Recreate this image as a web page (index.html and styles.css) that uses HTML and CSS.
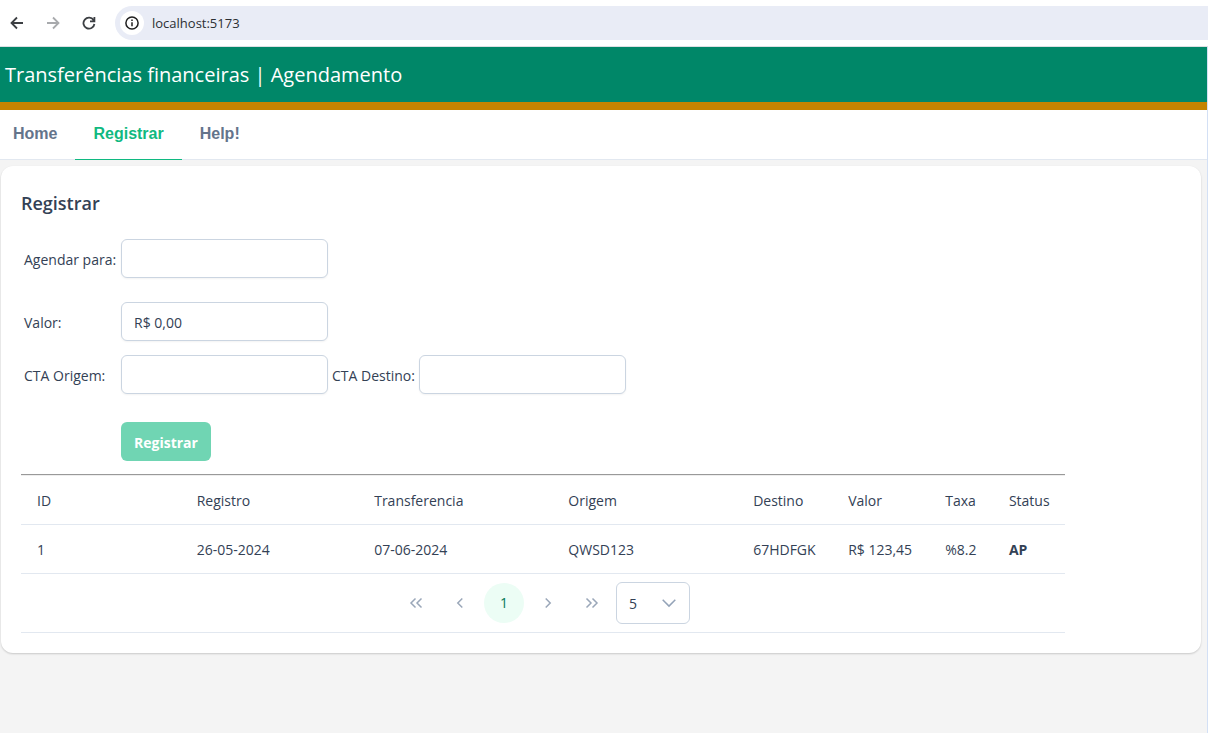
FILE: index.html
```html
<!DOCTYPE html>
<html lang="pt-BR">
<head>
<meta charset="utf-8">
<title>Transferências financeiras | Agendamento</title>
<link rel="stylesheet" href="styles.css">
</head>
<body>
<div class="toolbar">
  <button class="nav-btn" type="button" aria-label="Voltar"><svg width="14" height="14" viewBox="0 0 14 14"><path d="M13 7H1.8M7 1.5L1.5 7L7 12.5"/></svg></button>
  <button class="nav-btn nav-btn-off" type="button" aria-label="Avançar"><svg width="14" height="14" viewBox="0 0 14 14"><path d="M1 7H12.2M7 1.5L12.5 7L7 12.5"/></svg></button>
  <button class="nav-btn" type="button" aria-label="Recarregar"><svg width="14" height="14" viewBox="0 0 14 14"><path d="M11.6 4.2A5.5 5.5 0 1 0 12.4 8M12.4 1V5.4H8"/></svg></button>
  <div class="address">
    <button class="info-btn" type="button" aria-label="Informações do site"><svg width="14" height="14" viewBox="0 0 14 14"><circle cx="7" cy="7" r="6.1"/><path d="M7 6.2V10.2M7 3.6V5.1"/></svg></button>
    <input class="url" type="text" aria-label="Endereço" value="localhost:5173">
  </div>
</div>
<div class="page">
  <header class="banner"><h1 class="banner-title">Transferências financeiras | Agendamento</h1></header>
  <nav class="tabs">
    <a class="tab" href="#home">Home</a>
    <a class="tab tab-active" href="#registrar">Registrar</a>
    <a class="tab" href="#help">Help!</a>
  </nav>
  <main class="card">
    <h2 class="card-title">Registrar</h2>
    <div class="content">
      <form class="form">
        <div class="row row-date">
          <label class="label" for="date">Agendar para:</label>
          <input class="field" id="date" type="text">
        </div>
        <div class="row">
          <label class="label" for="amount">Valor:</label>
          <input class="field" id="amount" type="text" value="R$ 0,00">
        </div>
        <div class="row">
          <label class="label" for="from">CTA Origem:</label>
          <input class="field" id="from" type="text">
          <label class="label-inline" for="to">CTA Destino:</label>
          <input class="field" id="to" type="text">
        </div>
        <div class="actions"><button class="submit" type="submit" disabled>Registrar</button></div>
      </form>
      <hr class="divider">
      <table class="table">
        <colgroup><col class="col-id"><col class="col-created"><col class="col-transfer"><col class="col-from"><col class="col-to"><col class="col-amount"><col class="col-fee"><col class="col-status"></colgroup>
        <thead>
          <tr><th>ID</th><th>Registro</th><th>Transferencia</th><th>Origem</th><th>Destino</th><th>Valor</th><th>Taxa</th><th>Status</th></tr>
        </thead>
        <tbody>
          <tr><td>1</td><td>26-05-2024</td><td>07-06-2024</td><td>QWSD123</td><td>67HDFGK</td><td>R$ 123,45</td><td>%8.2</td><td class="status">AP</td></tr>
        </tbody>
      </table>
      <div class="pager">
        <button class="page-btn" type="button" aria-label="Primeira página"><svg width="14" height="14" viewBox="0 0 14 14"><path d="M6.5 2.5L2 7L6.5 11.5M12.5 2.5L8 7L12.5 11.5"/></svg></button>
        <button class="page-btn" type="button" aria-label="Página anterior"><svg width="14" height="14" viewBox="0 0 14 14"><path d="M9.3 2.5L4.8 7L9.3 11.5"/></svg></button>
        <button class="page-btn page-current" type="button">1</button>
        <button class="page-btn" type="button" aria-label="Próxima página"><svg width="14" height="14" viewBox="0 0 14 14"><path d="M4.7 2.5L9.2 7L4.7 11.5"/></svg></button>
        <button class="page-btn" type="button" aria-label="Última página"><svg width="14" height="14" viewBox="0 0 14 14"><path d="M1.5 2.5L6 7L1.5 11.5M7.5 2.5L12 7L7.5 11.5"/></svg></button>
        <div class="select-wrap">
          <select class="select" aria-label="Linhas por página"><option>5</option><option>10</option><option>20</option></select>
          <svg class="select-arrow" width="14" height="14" viewBox="0 0 14 14"><path d="M0.7 3.8L7 10.1L13.3 3.8"/></svg>
        </div>
      </div>
    </div>
  </main>
</div>
</body>
</html>
```
FILE: styles.css
```css
* { box-sizing: border-box; }

body {
  margin: 0;
  min-height: 100vh;
  display: flex;
  flex-direction: column;
  background: #fff;
  color: #334155;
  font: 14px/24px "Open Sans", "Noto Sans", sans-serif;
}

button, input, select { font: inherit; color: inherit; }
svg { display: block; fill: none; stroke: currentColor; stroke-width: 1.5; }

.toolbar {
  display: flex;
  align-items: center;
  padding: 6px 0 6px 5px;
  border-bottom: 1px solid #dcdfe3;
}
.nav-btn {
  display: grid;
  place-items: center;
  width: 24px;
  height: 24px;
  margin-right: 12px;
  padding: 0;
  border: 0;
  background: none;
  color: #3c3f43;
}
.nav-btn svg { stroke-width: 1.8; }
.nav-btn-off { color: #a8aaad; }
.address {
  flex: 1;
  display: flex;
  align-items: center;
  gap: 8px;
  margin-left: 2px;
  padding: 5px;
  border-radius: 17px 0 0 17px;
  background: #e9ecf6;
}
.info-btn {
  display: grid;
  place-items: center;
  width: 24px;
  height: 24px;
  padding: 0;
  border: 0;
  border-radius: 50%;
  background: #fff;
  color: #1f1f1f;
}
.url {
  flex: 1;
  height: 24px;
  padding: 0;
  border: 0;
  background: none;
  color: #2c2f33;
  font-size: 13px;
}

.page {
  flex: 1;
  border-right: 1px solid #d3e0f5;
  background: #f4f4f4;
}
.banner {
  padding: 12px 5px 11px;
  border-bottom: 8px solid #c48400;
  background: #008768;
  color: #fff;
}
.banner-title { margin: 0; font-size: 20px; line-height: 32px; font-weight: 400; }

.tabs {
  display: flex;
  border-bottom: 1px solid #e2e8f0;
  background: #fff;
}
.tab {
  margin-bottom: -1px;
  padding: 12px 18px 13px;
  border-bottom: 1px solid transparent;
  color: #64748b;
  font: bold 16px/24px "Liberation Sans", sans-serif;
  text-decoration: none;
}
.tab:first-child { padding-left: 13px; }
.tab-active { color: #10b981; border-bottom-color: #10b981; }

.card {
  margin: 6px 6px 0 1px;
  padding: 20px;
  border-radius: 12px;
  background: #fff;
  box-shadow: 0 1px 2px rgba(0, 0, 0, 0.18);
}
.card-title { margin: 0 0 19px; font-size: 18px; line-height: 34px; font-weight: 600; }
.content { width: 90%; }

.row { display: flex; align-items: center; gap: 4px; margin-bottom: 14px; padding-left: 3px; }
.row-date { margin-bottom: 24px; }
.label { width: 93px; }
.label, .label-inline { padding-top: 2px; white-space: nowrap; }
.field {
  width: 207px;
  height: 39px;
  padding: 2px 12px 0;
  border: 1px solid #cbd5e1;
  border-radius: 6px;
  background: #fff;
  box-shadow: 0 1px 2px rgba(18, 18, 23, 0.05);
}
.actions { padding: 14px 0 13px 100px; }
.submit {
  display: block;
  height: 39px;
  padding: 2px 13px 0;
  border: 0;
  border-radius: 6px;
  background: #70d5b3;
  color: #fff;
  font-weight: 700;
}
.divider { margin: 0; border: 0; border-top: 1px solid #999; border-bottom: 1px solid #eee; }

.table { width: 100%; table-layout: fixed; border-collapse: separate; border-spacing: 0; }
.table th, .table td {
  padding: 13px 16px 11px;
  border-bottom: 1px solid #e2e8f0;
  text-align: left;
  font-weight: 400;
  white-space: nowrap;
}
.table .status { font-weight: 700; }
.col-id { width: 15.3%; }
.col-created { width: 17%; }
.col-transfer { width: 18.6%; }
.col-from { width: 17.7%; }
.col-to { width: 9.1%; }
.col-amount { width: 9.3%; }
.col-fee { width: 6.1%; }
.col-status { width: 6.9%; }

.pager {
  display: flex;
  justify-content: center;
  align-items: center;
  gap: 4px;
  padding: 8px;
  border-bottom: 1px solid #e2e8f0;
}
.page-btn {
  display: grid;
  place-items: center;
  width: 40px;
  height: 40px;
  padding: 0;
  border: 0;
  border-radius: 50%;
  background: none;
  color: #9aa7b9;
}
.page-current { background: #ecfdf5; color: #047857; }
.select-wrap { position: relative; color: #94a3b8; }
.select {
  display: block;
  width: 74px;
  height: 42px;
  padding: 2px 12px 0;
  appearance: none;
  border: 1px solid #cbd5e1;
  border-radius: 6px;
  background: #fff;
  color: #334155;
}
.select-arrow { position: absolute; top: 14px; right: 14px; pointer-events: none; }
```
